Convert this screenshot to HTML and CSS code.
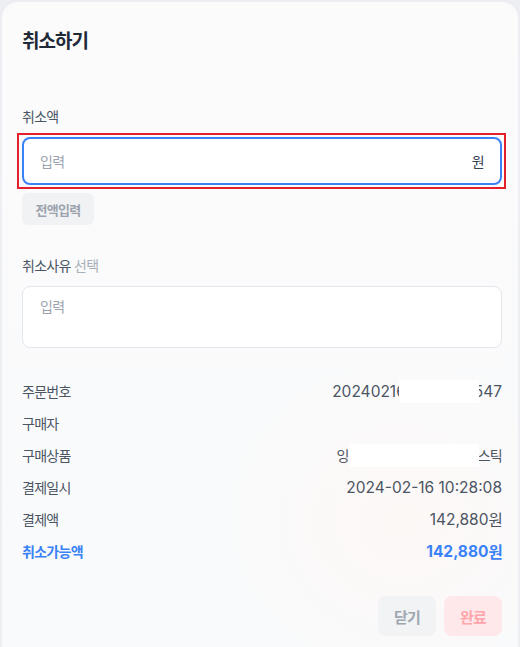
FILE: index.html
```html
<!DOCTYPE html>
<html lang="ko">
<head>
<meta charset="utf-8">
<title>취소하기</title>
<link rel="stylesheet" href="styles.css">
</head>
<body>
<div class="backdrop">
  <div class="modal">
    <h1 class="title ko">취소하기</h1>

    <label class="label ko">취소액</label>
    <div class="highlight">
      <div class="input amount">
        <span class="placeholder ko">입력</span>
        <span class="unit ko">원</span>
      </div>
    </div>
    <button class="btn-full ko">전액입력</button>

    <label class="label reason ko">취소사유 <span class="muted">선택</span></label>
    <div class="input textarea">
      <span class="placeholder ko">입력</span>
    </div>

    <dl class="info">
      <div class="row"><dt class="ko">주문번호</dt><dd><span>20240216</span><span class="mask m1"></span><span>547</span></dd></div>
      <div class="row"><dt class="ko">구매자</dt><dd></dd></div>
      <div class="row"><dt class="ko">구매상품</dt><dd><span class="ko product">잉</span><span class="mask m2"></span><span class="ko product">스틱</span></dd></div>
      <div class="row"><dt class="ko">결제일시</dt><dd>2024-02-16 10:28:08</dd></div>
      <div class="row"><dt class="ko">결제액</dt><dd>142,880<span class="ko">원</span></dd></div>
      <div class="row accent"><dt class="ko">취소가능액</dt><dd>142,880<span class="ko">원</span></dd></div>
    </dl>

    <div class="actions">
      <button class="btn close ko">닫기</button>
      <button class="btn done ko">완료</button>
    </div>
  </div>
</div>
</body>
</html>
```

FILE: styles.css
```css
* { box-sizing: border-box; }

html, body {
  margin: 0;
  padding: 0;
  height: 100%;
  overflow: hidden;
}

body {
  background: #eceef1;
  font-family: "Inter", "Noto Sans CJK KR", sans-serif;
  color: #4b5563;
}

.backdrop {
  height: 100%;
  padding: 2px 2px 0 2px;
  display: flex;
}

.modal {
  flex: 1;
  display: flex;
  flex-direction: column;
  background: radial-gradient(ellipse 180px 160px at 400px 520px, #fdf8f6 0%, rgba(253,248,246,0) 100%),
              linear-gradient(180deg, #fbfbfc 0%, #f9fafb 100%);
  border-radius: 16px 16px 0 0;
  padding: 26px 16px 0 20px;
}

.ko { letter-spacing: -0.05em; }

.title {
  margin: 0;
  font-size: 19px;
  line-height: 28px;
  font-weight: 700;
  color: #1f2937;
}

.label {
  display: block;
  margin-top: 51px;
  margin-bottom: 10px;
  font-size: 14px;
  line-height: 20px;
  color: #4b5563;
}

.label.reason { margin-top: 31px; }

.muted { color: #a9afb8; }

.highlight {
  margin: -4px -4px -4px -5px;
  border: 2px solid #e3202b;
  padding: 2px 2px 2px 3px;
}

.input {
  background: #ffffff;
  border-radius: 8px;
  font-size: 14px;
}

.amount {
  height: 48px;
  border: 2px solid #3b82f6;
  display: flex;
  align-items: center;
  justify-content: space-between;
  padding: 0 16px;
}

.placeholder { color: #9ca3af; }

.unit { color: #374151; }

.textarea {
  height: 62px;
  border: 1px solid #e3e6ea;
  padding: 10px 17px;
  line-height: 20px;
}

.btn-full {
  align-self: flex-start;
  margin-top: 8px;
  width: 72px;
  height: 32px;
  border: none;
  border-radius: 6px;
  background: #f1f2f4;
  color: #9ca3af;
  font-family: inherit;
  font-size: 13px;
  font-weight: 600;
  padding: 0;
}

.info {
  margin: 27px 0 0 0;
  display: flex;
  flex-direction: column;
}

.row {
  display: flex;
  justify-content: space-between;
  align-items: center;
  height: 32px;
  font-size: 14px;
  color: #4b5563;
}

.row dt { font-size: 14px; }

.row dd {
  margin: 0;
  display: flex;
  align-items: center;
  font-size: 15.5px;
  color: #4b5563;
}

.row dd .product { font-size: 14px; }

.row.accent { color: #3b82f6; font-weight: 700; }
.row.accent dd { color: #3b82f6; }

.mask {
  display: inline-block;
  background: #ffffff;
  height: 23px;
  position: relative;
  z-index: 1;
}

.m1 { width: 80px; margin: 0 -5px 0 -7px; }
.m2 { width: 130px; margin: 0 -1px 0 0; }

.actions {
  margin-top: 29px;
  display: flex;
  justify-content: flex-end;
  gap: 8px;
}

.btn {
  width: 58px;
  height: 40px;
  border: none;
  border-radius: 8px;
  font-family: inherit;
  font-size: 15px;
  font-weight: 700;
  padding: 0;
}

.close { background: #f1f3f5; color: #a0a6af; }
.done { background: #ffe8ea; color: #ffa5ab; }
```
